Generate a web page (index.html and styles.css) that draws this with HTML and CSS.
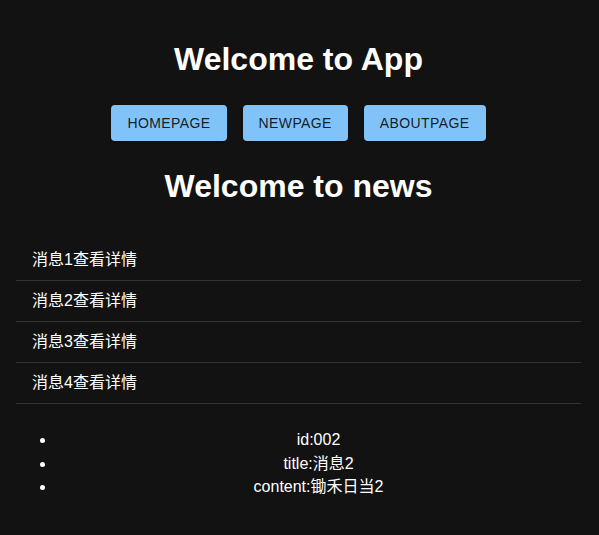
FILE: index.html
```html
<!DOCTYPE html>
<html lang="zh">
<head>
<meta charset="utf-8">
<title>App</title>
<link rel="stylesheet" href="styles.css">
</head>
<body>
<div class="app">
  <h1 class="title">Welcome to App</h1>
  <nav class="nav">
    <button class="btn">HOMEPAGE</button>
    <button class="btn">NEWPAGE</button>
    <button class="btn">ABOUTPAGE</button>
  </nav>
  <h1 class="title title-news">Welcome to news</h1>
  <div class="news-list">
    <div class="news-item">消息1查看详情</div>
    <div class="news-item">消息2查看详情</div>
    <div class="news-item">消息3查看详情</div>
    <div class="news-item">消息4查看详情</div>
  </div>
  <ul class="detail">
    <li>id:002</li>
    <li>title:消息2</li>
    <li>content:锄禾日当2</li>
  </ul>
</div>
</body>
</html>
```
FILE: styles.css
```css
html, body {
  margin: 0;
  padding: 0;
  background: #121212;
}
body {
  font-family: "Liberation Sans", "Noto Sans CJK SC", Arial, sans-serif;
  color: #fff;
}
.app {
  padding: 41px 18px 0 16px;
}
.title {
  margin: 0;
  font-size: 32px;
  line-height: 37px;
  font-weight: 700;
  text-align: center;
}
.title-news {
  margin-top: 27px;
}
.nav {
  margin-top: 27px;
  display: flex;
  justify-content: center;
  gap: 16px;
}
.btn {
  font-family: "Liberation Sans", Arial, sans-serif;
  font-size: 14px;
  line-height: 24px;
  letter-spacing: 0.4px;
  font-weight: 400;
  padding: 6px 16px;
  border: none;
  border-radius: 4px;
  background: #81c3f8;
  color: rgba(0, 0, 0, 0.87);
  box-shadow: 0 1px 3px rgba(0, 0, 0, 0.3);
}
.news-list {
  margin-top: 35px;
}
.news-item {
  padding: 8px 16px;
  font-size: 16px;
  line-height: 24px;
  border-bottom: 1px solid rgba(255, 255, 255, 0.14);
}
.detail {
  margin: 24px 0 0;
  padding-left: 40px;
  font-size: 16px;
  line-height: 23.5px;
  text-align: center;
}
```
